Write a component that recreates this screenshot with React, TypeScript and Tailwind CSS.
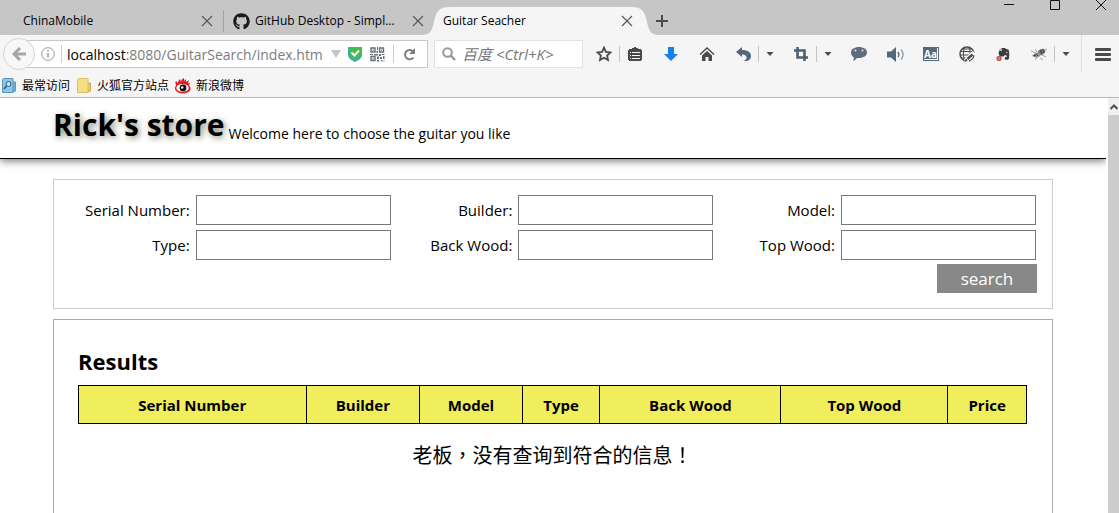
import type { ReactNode } from "react";
import { FaGithub } from "react-icons/fa";

function CloseGlyph() {
  return (
    <svg width="12" height="12" viewBox="0 0 12 12" stroke="#555" strokeWidth="1.1" fill="none" aria-hidden="true">
      <path d="M1 1l10 10M11 1L1 11" />
    </svg>
  );
}

function Caret() {
  return (
    <button type="button" aria-label="More options" className="flex h-[30px] w-[21px] items-center justify-center">
      <svg width="8" height="4" viewBox="0 0 8 4" aria-hidden="true">
        <path d="M0.500 0h7L4 4z" fill="#4a4a4a" />
      </svg>
    </button>
  );
}

function Divider() {
  return <span className="h-4 w-px shrink-0 bg-[#c4c4c4]" />;
}

function Tool({ label, children }: { label: string; children: ReactNode }) {
  return (
    <button type="button" aria-label={label} className="flex h-[30px] w-[30px] items-center justify-center">
      {children}
    </button>
  );
}

function TabStrip() {
  return (
    <div className="flex h-[35px] bg-[#c6c6c6] text-xs">
      <div className="flex w-[223px] items-center justify-between pt-[7px] pr-[10px] pl-[23px]">
        <span>ChinaMobile</span>
        <button type="button" aria-label="Close ChinaMobile"><CloseGlyph /></button>
      </div>
      <span className="mt-[10px] h-[22px] w-px bg-[#a2a2a2]" />
      <div className="flex w-[198px] items-center pt-[7px] pl-[9px]">
        <FaGithub size={17} color="#1b1b1b" className="shrink-0" />
        <span className="ml-[5px] w-[157px] shrink-0 whitespace-nowrap">GitHub Desktop - Simpl...</span>
        <button type="button" aria-label="Close GitHub Desktop"><CloseGlyph /></button>
      </div>
      <div className="relative flex w-[237px] items-center justify-between pt-[7px] pr-[26px] pl-[21px]">
        <div className="absolute inset-x-0 top-[7px] bottom-0 flex">
          <svg width="28" height="28" viewBox="0 0 28 28" fill="#f5f5f5" aria-hidden="true">
            <path d="M0 28C8 28 10 24 12 15C14 5 17 0 27 0H28V28Z" />
          </svg>
          <span className="flex-1 bg-[#f5f5f5]" />
          <svg width="28" height="28" viewBox="0 0 28 28" fill="#f5f5f5" aria-hidden="true">
            <path d="M28 28C20 28 18 24 16 15C14 5 11 0 1 0H0V28Z" />
          </svg>
        </div>
        <span className="relative">Guitar Seacher</span>
        <button type="button" aria-label="Close Guitar Seacher" className="relative"><CloseGlyph /></button>
      </div>
      <button type="button" aria-label="New tab" className="-ml-[4px] pt-[7px]">
        <svg width="14" height="14" viewBox="0 0 14 14" stroke="#4a4a4a" strokeWidth="2" aria-hidden="true">
          <path d="M7 1v12M1 7h12" />
        </svg>
      </button>
      <div className="ml-auto flex gap-[34px] pr-3">
        <button type="button" aria-label="Minimize" className="flex h-[10px]">
          <svg width="12" height="11" viewBox="0 0 12 11" stroke="#111" aria-hidden="true"><path d="M1 4.500h10" /></svg>
        </button>
        <button type="button" aria-label="Maximize" className="flex h-[10px]">
          <svg width="12" height="11" viewBox="0 0 12 11" stroke="#111" fill="none" aria-hidden="true"><path d="M1.500 0.500h9v9h-9z" /></svg>
        </button>
        <button type="button" aria-label="Close window" className="flex h-[10px]">
          <svg width="12" height="11" viewBox="0 0 12 11" stroke="#111" aria-hidden="true"><path d="M1 0l10 10M11 0L1 10" /></svg>
        </button>
      </div>
    </div>
  );
}

function AddressBar() {
  return (
    <div className="flex min-w-0 flex-1 items-center">
      <button type="button" aria-label="Back" className="relative z-10 flex h-8 w-8 shrink-0 items-center justify-center rounded-full border border-[#d4d4d4] bg-[#f7f7f7]">
        <svg width="14" height="14" viewBox="0 0 14 14" fill="none" stroke="#a6a6a6" strokeWidth="3" aria-hidden="true">
          <path d="M8 1L2 7l6 6M2.500 7H14" />
        </svg>
      </button>
      <div className="-ml-[10px] flex h-7 min-w-0 flex-1 items-center border border-[#c8c8c8] bg-white pl-[15px]">
        <svg width="14" height="14" viewBox="0 0 14 14" fill="none" stroke="#999" className="shrink-0" aria-hidden="true">
          <circle cx="7" cy="7" r="6.300" />
          <path d="M7 6v4.500M7 3v1.500" strokeWidth="1.500" />
        </svg>
        <span className="ml-[6px] h-[18px] w-px shrink-0 bg-[#ccc]" />
        <div className="ml-[5px] min-w-0 flex-1 overflow-hidden text-[14px] whitespace-nowrap text-[#7c7c7c]">
          <span className="text-black">localhost</span>:8080/GuitarSearch/index.htm
        </div>
        <svg width="10" height="8" viewBox="0 0 10 8" className="ml-1 shrink-0" aria-hidden="true"><path d="M0 0h10L5 8z" fill="#c4c4c4" /></svg>
        <svg width="14" height="16" viewBox="0 0 14 16" className="ml-[7px] shrink-0" aria-hidden="true">
          <path d="M0 1h14v8c0 3-3 5-7 7C3 14 0 12 0 9z" fill="#3aabc0" />
          <path d="M1 1h12v7c0 3-3 4.500-6 6C4 12.500 1 11 1 8z" fill="#45bd4c" />
          <path d="M3.500 6.500l3 3 4.500-5" fill="none" stroke="#fff" strokeWidth="2" />
        </svg>
        <svg width="15" height="15" viewBox="0 0 15 15" className="ml-2 shrink-0" aria-hidden="true">
          <g fill="none" stroke="#667078"><path d="M1 1h4v4H1zM9.500 1h4v4h-4zM1 9.500h4v4H1z" strokeWidth="1.400" /></g>
          <path d="M2.500 2.500h1.200v1.200H2.500zM11 2.500h1.200v1.200H11zM2.500 11h1.200v1.200H2.500zM7 0h1v3H7zM6.500 4H8v2H6.500zM0 7h3v1H0zM4 7h4v1.500H4zM9 7h2v2H9zM12 7h2.500v1H12zM7 9.500h2V12H7zM10 10h2v2h-2zM13 9h1.500v3H13zM7 13h2v1.500H7zM11 13h1.500v1.500H11zM13.500 13.500h1v1h-1z" fill="#667078" />
        </svg>
        <span className="ml-2 h-[18px] w-px shrink-0 bg-[#ccc]" />
        <button type="button" aria-label="Reload" className="mr-[11px] ml-[9px] shrink-0">
          <svg width="13" height="13" viewBox="0 0 13 13" fill="none" aria-hidden="true">
            <path d="M10.500 9.500A4.700 4.700 0 1 1 10 3.200" stroke="#7d7d7d" strokeWidth="2" />
            <path d="M12 0v6H6z" fill="#7d7d7d" />
          </svg>
        </button>
      </div>
      <label className="ml-[6px] flex h-7 w-[149px] shrink-0 items-center border border-[#e2e2e2] bg-white pl-[7px]">
        <svg width="14" height="14" viewBox="0 0 14 14" fill="none" stroke="#999" strokeWidth="2" className="shrink-0" aria-hidden="true">
          <circle cx="5.500" cy="5.500" r="4.300" /><path d="M8.700 8.700L13 13" strokeWidth="2.400" />
        </svg>
        <input aria-label="Search the web" placeholder="百度 <Ctrl+K>" className="ml-[6px] w-[110px] text-[15px] italic outline-none placeholder:text-[#777]" />
      </label>
    </div>
  );
}

function Toolbar() {
  return (
    <div className="flex h-[38px] items-center pl-[3px] text-[#4a4a4a]">
      <AddressBar />
      <div className="ml-[6px] flex shrink-0 items-center gap-[6px]">
        <div className="flex items-center">
          <Tool label="Bookmark this page">
            <svg width="16" height="16" viewBox="0 0 16 16" fill="none" stroke="currentColor" strokeWidth="1.800" aria-hidden="true">
              <path d="M8 1.700l1.900 4.200 4.600.5-3.400 3.100.9 4.600L8 11.800l-4 2.300.9-4.600L1.500 6.400l4.600-.5z" />
            </svg>
          </Tool>
          <Divider />
          <Tool label="Show bookmarks">
            <svg width="14" height="14" viewBox="0 0 14 14" shapeRendering="crispEdges" aria-hidden="true">
              <path d="M1 2h3V1h2V0h2v1h2v1h3v1h1v10h-1v1H1v-1H0V3h1z" fill="currentColor" />
              <path d="M2 5h1v1H2zM4 5h8v1H4zM2 8h1v1H2zM4 8h8v1H4zM2 11h1v1H2zM4 11h8v1H4z" fill="#f5f5f5" />
            </svg>
          </Tool>
        </div>
        <Tool label="Downloads">
          <svg width="14" height="14" viewBox="0 0 14 14" aria-hidden="true"><path d="M4 0h6v7h4l-7 7-7-7h4z" fill="#1880e8" /></svg>
        </Tool>
        <Tool label="Home">
          <svg width="16" height="14" viewBox="0 0 16 14" aria-hidden="true">
            <path d="M1 7.500L8 1l7 6.500" fill="none" stroke="currentColor" strokeWidth="1.400" />
            <path d="M3 8.500l5-4.500 5 4.500V14H9.500v-4h-3v4H3z" fill="currentColor" />
          </svg>
        </Tool>
        <div className="flex items-center">
          <Tool label="Undo close tab">
            <svg width="15" height="14" viewBox="0 0 15 14" aria-hidden="true">
              <path d="M0 5L6 0v3c6 0 9 2.500 9 6 0 3-2 4.500-4.500 5H8c2-1.500 3-2.500 2.500-4-.7-2-2.500-2.500-4.500-2.500V10z" fill="#56677a" />
            </svg>
          </Tool>
          <Divider />
          <Caret />
        </div>
        <div className="flex items-center">
          <Tool label="Screenshot">
            <svg width="14" height="14" viewBox="0 0 14 14" fill="none" stroke="#4c6073" strokeWidth="2.600" aria-hidden="true">
              <path d="M3.500 0v10.500H14M0 3.500h10.500V14" />
            </svg>
          </Tool>
          <Divider />
          <Caret />
        </div>
        <Tool label="Chat">
          <svg width="16" height="14" viewBox="0 0 16 14" aria-hidden="true">
            <path d="M8 0c4.500 0 8 2.300 8 5.500S12.500 11 8 11c-.8 0-1.500 0-2 0-1 1.500-2.500 2.500-4 2.700.8-.9 1-2 .7-3.500C1 9.200 0 7.500 0 5.500 0 2.300 3.500 0 8 0z" fill="#5d6d7d" />
            <g fill="#e5e8ea"><circle cx="4.500" cy="3.500" r="1" /><circle cx="11.500" cy="3.500" r="1" /></g>
          </svg>
        </Tool>
        <Tool label="Sound">
          <svg width="17" height="15" viewBox="0 0 17 15" fill="none" aria-hidden="true">
            <path d="M0 4.500h4L9 0v15l-5-4.500H0z" fill="#566878" />
            <path d="M11 5c1 1.500 1 3.500 0 5" stroke="#566878" strokeWidth="1.400" />
            <path d="M14 2.500c2.500 3 2.500 7 0 10" stroke="#9aa5ae" strokeWidth="1.500" />
          </svg>
        </Tool>
        <Tool label="Dictionary">
          <span className="flex h-[14px] w-4 border border-[#566979] bg-white pr-px pb-px">
            <span className="flex flex-1 items-center justify-center bg-[#566979] text-[10px] leading-none font-bold text-white">Aa</span>
          </span>
        </Tool>
        <Tool label="Translate page">
          <svg width="16" height="16" viewBox="0 0 16 16" fill="none" stroke="currentColor" aria-hidden="true">
            <circle cx="8" cy="8" r="7" strokeWidth="1.500" />
            <path d="M1 5.500h14M1 9h9M5.500 1.500c-1.500 4-1.500 9 0 13M10 1.500c1 2.500 1.300 4 1 6M3 3h10M2 12h5" />
            <path d="M15.500 6.500l-9 9" stroke="#f5f5f5" strokeWidth="5" />
            <path d="M13.500 8.500l-5 4.500" strokeWidth="2.400" />
            <path d="M8 13.500l-2 1.500" strokeWidth="2" />
            <path d="M15 9c-.5 3-2.500 5.500-5 6" />
          </svg>
        </Tool>
        <Tool label="Clip to Evernote">
          <svg width="14" height="16" viewBox="0 0 14 16" aria-hidden="true">
            <path d="M3 5h3V2h3l1 1 2.500.5c1 3 1 6.500.3 9.500-.5 1.200-4.300 1.200-4.100-.8.1-1.500 1.400-1.300 2-1.100V9.500L9 9l-1.500 1.500H4C2.500 9 2.500 6.500 3 5z" fill="#3d3d3d" />
            <path d="M3 4.200h2.300V2" stroke="#888" fill="none" />
            <circle cx="10.800" cy="6.500" r=".7" fill="#ddd" />
            <rect x="1" y="10.500" width="4" height="4" rx="1.500" fill="#ee7762" stroke="#a23b2a" />
          </svg>
        </Tool>
        <div className="flex items-center">
          <Tool label="Firebug">
            <svg width="16" height="14" viewBox="0 0 16 14" fill="none" aria-hidden="true">
              <path d="M0 4l5 2M1 9l5-1M4 13l3-4M9 11l3 2M11 8l4 2M6 5L4 2M13 4l3-2" stroke="#a5a5a5" />
              <ellipse cx="10.500" cy="5" rx="4" ry="2.800" transform="rotate(-30 10.500 5)" fill="#777" />
              <ellipse cx="6" cy="8" rx="3.500" ry="2.300" transform="rotate(-20 6 8)" fill="#929292" />
              <path d="M9 3l2 4M11.500 2.500l1.500 3M5 7l2 2" stroke="#333" />
              <circle cx="3.500" cy="8.500" r="1.100" fill="#333" />
            </svg>
          </Tool>
          <Divider />
          <Caret />
        </div>
      </div>
      <span className="ml-[5px] h-[38px] w-px shrink-0 bg-[#dedede]" />
      <div className="ml-[6px] pr-px">
        <Tool label="Open menu">
          <svg width="16" height="13" viewBox="0 0 16 13" fill="currentColor" aria-hidden="true">
            <rect width="16" height="3" rx="1" /><rect y="5" width="16" height="3" rx="1" /><rect y="10" width="16" height="3" rx="1" />
          </svg>
        </Tool>
      </div>
    </div>
  );
}

function Bookmarks() {
  return (
    <nav className="flex h-[25px] items-center border-b border-[#b8b8b8] pt-px pl-[2px] text-xs">
      <a href="#most-visited" className="flex items-center gap-[5px]">
        <svg width="15" height="16" viewBox="0 0 15 16" aria-hidden="true">
          <path d="M10 4h3.500v9l-2.500 1z" fill="#72b5dd" stroke="#5b97bb" />
          <path d="M.5 1.500l1-1h9.500v14H.5z" fill="#8bc7e7" stroke="#5b97bb" />
          <circle cx="6.500" cy="6" r="2.500" fill="#c8e8f8" stroke="#245b80" />
          <path d="M4.500 8L2 11" stroke="#245b80" strokeWidth="1.500" />
        </svg>
        最常访问
      </a>
      <a href="#firefox" className="ml-[7px] flex items-center gap-[5px]">
        <svg width="15" height="16" viewBox="0 0 15 16" aria-hidden="true">
          <path d="M10 5h3.500v8l-2.500 1z" fill="#e8c85c" stroke="#ccb04f" />
          <path d="M.5 1.500l1-1h9.500v14H.5z" fill="#f6df82" stroke="#d9c067" />
        </svg>
        火狐官方站点
      </a>
      <a href="#weibo" className="ml-[6px] flex items-center gap-[5px]">
        <svg width="16" height="16" viewBox="0 0 16 16" aria-hidden="true">
          <path d="M1 7.500C.5 5.500 0 4 1 3l2 2C3 3 4 2 5 1l1 3C6 2 7 1 9 0v3l2-2v3l3-2-1 3.500 2-.5-1 2.500c2.500 2 2 5.500-1.500 7-3 1.500-8 1.300-10-.5C-.5 12.500-.5 9.500 1 7.500z" fill="#dc1f25" />
          <ellipse cx="7.500" cy="10" rx="6.200" ry="3.900" fill="#fff" />
          <circle cx="8" cy="10" r="3.400" fill="#111" /><circle cx="7.200" cy="9.500" r="1.200" fill="#fff" />
        </svg>
        新浪微博
      </a>
    </nav>
  );
}

function Field({ id, label }: { id: string; label: string }) {
  return (
    <div className="flex items-center justify-end gap-[6px]">
      <label htmlFor={id} className="text-[15px] leading-6 whitespace-nowrap">{label}:</label>
      <input id={id} className="h-[30px] w-[195px] min-w-0 border border-[#777] bg-white px-1 text-[15px]" />
    </div>
  );
}

const fields = [
  { id: "serial", label: "Serial Number" },
  { id: "builder", label: "Builder" },
  { id: "model", label: "Model" },
  { id: "type", label: "Type" },
  { id: "back-wood", label: "Back Wood" },
  { id: "top-wood", label: "Top Wood" },
];

function Punctuation({ children }: { children: string }) {
  return <span className="font-['Noto_Sans_CJK_TC',sans-serif]" lang="zh-Hant">{children}</span>;
}

function StorePage() {
  return (
    <div className="min-w-0 flex-1 overflow-hidden bg-white">
      <header className="border-b border-black shadow-[0_2px_8px_#777]">
        <div className="mx-auto flex h-[60px] w-full max-w-[1000px] items-end gap-1 pt-[3px] pb-[14px]">
          <h1 className="self-start text-[30px] leading-[48px] font-bold [text-shadow:2px_2px_6px_#887]">Rick's store</h1>
          <p className="text-[14px] leading-5">Welcome here to choose the guitar you like</p>
        </div>
      </header>
      <main className="mx-auto w-full max-w-[1000px] pt-5">
        <form onSubmit={(e) => e.preventDefault()} className="h-[130px] border border-[#ccc] pt-[15px] pr-4 pl-[14px]">
          <div className="grid grid-cols-3 gap-y-[5px]">
            {fields.map((f) => <Field key={f.id} {...f} />)}
          </div>
          <div className="mt-1 -mr-px flex justify-end">
            <button type="submit" className="h-[29px] w-[100px] bg-[#888] text-[17px] leading-7 text-white">search</button>
          </div>
        </form>
        <section className="mt-[10px] min-h-[400px] border border-[#aaa] pt-6 pr-[25px] pl-6">
          <h2 className="text-[22px] leading-[34px] font-bold">Results</h2>
          <table className="mt-[7px] w-full table-fixed border-collapse text-[15px]">
            <colgroup>
              <col className="w-[24%]" />
              <col className="w-[12%]" />
              <col className="w-[10.800%]" />
              <col className="w-[8.200%]" />
              <col className="w-[19.100%]" />
              <col className="w-[17.600%]" />
              <col className="w-[8.300%]" />
            </colgroup>
            <thead>
              <tr className="h-[38px] bg-[#f0ee5c]">
                {["Serial Number", "Builder", "Model", "Type", "Back Wood", "Top Wood", "Price"].map((name) => (
                  <th key={name} scope="col" className="border border-black pt-[2px] font-bold">{name}</th>
                ))}
              </tr>
            </thead>
          </table>
          <p className="mt-4 text-center text-xl leading-[30px]">
            老板<Punctuation>，</Punctuation>没有查询到符合的信息<Punctuation>！</Punctuation>
          </p>
        </section>
      </main>
    </div>
  );
}

export default function App() {
  return (
    <div className="flex h-screen flex-col overflow-hidden bg-[#f5f5f5] font-['Open_Sans','Noto_Sans_CJK_SC',sans-serif] text-black">
      <TabStrip />
      <Toolbar />
      <Bookmarks />
      <div className="flex min-h-0 flex-1">
        <StorePage />
        <div className="flex w-[13px] shrink-0 flex-col overflow-hidden border-l-2 border-white bg-[#cdcdcd]">
          <button type="button" aria-label="Scroll up" className="flex h-[17px] items-center justify-center bg-[#f0f0f0]">
            <svg width="8" height="6" viewBox="0 0 8 6" fill="none" stroke="#505050" strokeWidth="2" aria-hidden="true"><path d="M0.500 5L4 1.500 7.500 5" /></svg>
          </button>
        </div>
      </div>
    </div>
  );
}
